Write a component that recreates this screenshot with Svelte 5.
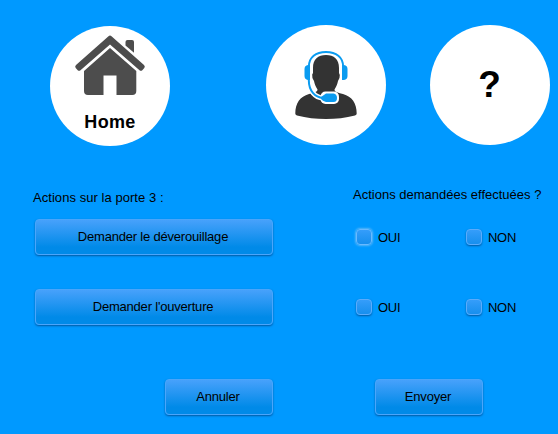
<script>
  const rows = [
    { label: 'Demander le déverouillage', focused: true },
    { label: "Demander l'ouverture", focused: false }
  ];
</script>

<main>
  <nav>
    <button class="circle home" aria-label="Home">
      <svg width="120" height="120" viewBox="0 0 120 120">
        <g fill="#4d4d4d">
          <path d="M75.500 19.500V16Q75.500 14 77.500 14H82Q84 14 84 16V26.700Z" />
          <path d="M58.500 10.200Q60 9 61.500 10.200L94 39Q95.500 40.500 94.300 42L92.300 44.200Q91 45.400 89.500 44.200L60 18.500L30.500 44.200Q29 45.400 27.700 44.200L25.700 42Q24.500 40.500 26 39Z" />
          <path d="M60 22L86.300 45V65Q86.300 69 82.300 69H66.500V49.500H53.500V69H38Q34 69 34 65V45Z" />
        </g>
      </svg>
      <span>Home</span>
    </button>
    <button class="circle agent" aria-label="Assistance">
      <svg width="120" height="120" viewBox="0 0 120 120">
        <path fill="#333" d="M29.300 88.500C29.300 78 34 71.500 43 69C49 67.300 51.500 67 51.500 64.500C49.500 61.500 48.700 59 48 56Q45.800 53.500 46.200 49.500L47 48V43C47 34 52 30 60 30S73 34 73 43V48L73.800 50Q74 53.500 72 56C71.300 59 70.500 61.500 68.500 64.500C68.500 67 71 67.300 77 69C86 71.500 90.700 78 90.700 88.500Q90.700 90 89 90.500Q75 94 60 94T31 90.500Q29.300 90 29.300 88.500Z" />
        <path fill="none" stroke="#fff" stroke-width="5" d="M43.300 56C43.300 66 49 72.500 57 73" />
        <rect x="54.500" y="66.500" width="18.500" height="12.500" rx="5" fill="#fff" />
        <path fill="none" stroke="#0a9bf0" stroke-width="2" d="M42.800 42C42.800 32 50 27 60 27S77.200 32 77.200 42M42.800 42V55C42.800 66 49 72.500 57 73" />
        <path fill="#0a9bf0" d="M44 40H42Q38.500 40.500 38.500 44V51Q38.500 54.500 42 55H44ZM76 40H78Q81.500 40.500 81.500 44V51Q81.500 54.500 78 55H76Z" />
        <path fill="#0a9bf0" d="M55 72L60 68.500H67.500Q71 69 71 73T67.500 77H60Q56.500 76 55 74Z" />
      </svg>
    </button>
    <button class="circle help"><span>?</span></button>
  </nav>

  <div class="headings">
    <p class="left">Actions sur la porte 3 :</p>
    <p class="right">Actions demandées effectuées ?</p>
  </div>

  {#each rows as row}
    <div class="row">
      <button class="action wide">{row.label}</button>
      <label class="yes"><input type="checkbox" class:focused={row.focused} /><span>OUI</span></label>
      <label class="no"><input type="checkbox" /><span>NON</span></label>
    </div>
  {/each}

  <footer>
    <button class="action">Annuler</button>
    <button class="action">Envoyer</button>
  </footer>
</main>

<style>
  :global(body) { margin: 0; background: #0099ff; }
  main {
    box-sizing: border-box;
    width: 558px;
    height: 434px;
    overflow: hidden;
    padding-top: 25px;
    background: #0099ff;
    color: #000;
    font: 13px/16px "Liberation Sans", Arial, sans-serif;
  }
  button { font: inherit; color: inherit; padding: 0; border: 0; }
  nav { display: flex; height: 121px; padding-left: 50px; }
  .circle {
    width: 120px;
    height: 120px;
    flex: none;
    border-radius: 50%;
    background: #fff;
    display: flex;
    flex-direction: column;
    align-items: center;
  }
  svg { display: block; flex: none; }
  .home { margin-top: 1px; }
  .home span { margin-top: -34px; font-weight: bold; font-size: 18px; line-height: 20px; letter-spacing: 0.35px; }
  .agent { margin-left: 96px; }
  .help { margin-left: 44px; justify-content: center; }
  .help span { font-size: 37px; line-height: 40px; font-weight: bold; padding-right: 1px; }
  .headings { display: flex; height: 73px; }
  .headings p { margin: 0; white-space: nowrap; }
  .left { width: 320px; padding: 44px 0 0 33px; box-sizing: border-box; letter-spacing: 0.05px; }
  .right { padding: 41px 0 0 33px; }
  .row { display: flex; height: 70px; padding-left: 35px; align-items: flex-start; }
  .action {
    box-sizing: border-box;
    width: 108px;
    height: 36px;
    padding: 0 2px 1px 0;
    border: 1px solid #4ba5fa;
    border-radius: 4px;
    background: linear-gradient(#47a1fb, #008ae8 80%);
    box-shadow: 0 1px 2px rgba(0, 45, 100, 0.6);
    letter-spacing: -0.2px;
  }
  .wide { width: 238px; flex: none; }
  label { display: flex; align-items: center; height: 36px; gap: 6px; }
  label span { padding-top: 1px; letter-spacing: -0.3px; }
  .yes { width: 110px; margin-left: 83px; }
  input {
    appearance: none;
    box-sizing: border-box;
    width: 16px;
    height: 16px;
    margin: 0 0 1px;
    border: 1px solid #5cabfb;
    border-radius: 4px;
    background: linear-gradient(#359dfa, #168fee);
    box-shadow: 0 1px 2px rgba(0, 45, 100, 0.6);
  }
  input.focused { border-color: #69b9ff; box-shadow: 0 0 2px 1px #55b5f8; }
  footer { display: flex; padding: 20px 0 0 165px; gap: 102px; }
</style>
